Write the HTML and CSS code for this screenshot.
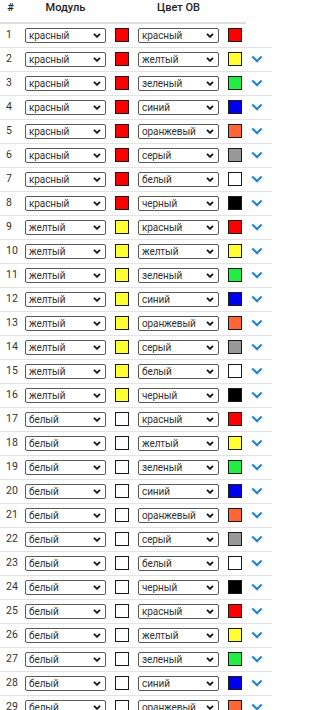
FILE: index.html
```html
<!DOCTYPE html>
<html lang="ru">
<head>
    <meta charset="UTF-8">
    <meta name="viewport" content="width=device-width, initial-scale=1.0">
    <title>Цвет ОВ</title>
    <link rel="stylesheet" href="styles.css">
</head>
<body>
    <table class="color-table">
        <colgroup>
            <col class="col-num">
            <col class="col-pick">
            <col class="col-swatch">
            <col class="col-pick">
            <col class="col-swatch">
            <col class="col-more">
        </colgroup>
        <thead>
            <tr>
                <th>#</th>
                <th>Модуль</th>
                <th></th>
                <th>Цвет ОВ</th>
                <th></th>
                <th class="blank"></th>
            </tr>
        </thead>
        <tbody id="rows"></tbody>
    </table>

    <script>
        const colors = {
            'красный': '#ff0000',
            'желтый': '#ffff33',
            'зеленый': '#22ee44',
            'синий': '#0000ee',
            'оранжевый': '#ff6633',
            'серый': '#999999',
            'белый': '#ffffff',
            'черный': '#000000'
        };
        const names = Object.keys(colors);

        // Module colour / fibre colour pairs
        const rows = [];
        ['красный', 'желтый', 'белый', 'белый'].forEach(module => {
            names.forEach(fibre => rows.push([module, fibre]));
        });

        function picker(value) {
            const options = names.map(n =>
                `<option${n === value ? ' selected' : ''}>${n}</option>`).join('');
            return `<span class="pick"><select>${options}</select>` +
                `<svg class="pick-arrow" width="8" height="5" viewBox="0 0 8 5">` +
                `<path d="M1 0.8 L4 3.8 L7 0.8" fill="none" stroke="#111" stroke-width="1.8"/></svg></span>`;
        }

        function swatch(value) {
            return `<span class="swatch" style="background: ${colors[value]}"></span>`;
        }

        const body = document.getElementById('rows');
        body.innerHTML = rows.slice(0, 29).map(([module, fibre], i) => `
            <tr>
                <td class="num">${i + 1}</td>
                <td>${picker(module)}</td>
                <td>${swatch(module)}</td>
                <td>${picker(fibre)}</td>
                <td>${swatch(fibre)}</td>
                <td>${i === 0 ? '' :
                    '<svg class="more" width="12" height="8" viewBox="0 0 12 8"><path d="M1.3 1.5 L6 6 L10.7 1.5" fill="none" stroke="#2a8ad6" stroke-width="2.4"/></svg>'}</td>
            </tr>`).join('');
    </script>
</body>
</html>
```

FILE: styles.css
```css
* {
    box-sizing: border-box;
}

body {
    margin: 0;
    font-family: Roboto, "Liberation Sans", sans-serif;
    font-size: 11px;
    color: #333;
    background: white;
}

.color-table {
    width: 272px;
    table-layout: fixed;
    border-collapse: collapse;
    border-spacing: 0;
}

.col-num {
    width: 20px;
}

.col-pick {
    width: 90px;
}

.col-swatch {
    width: 23px;
}

.col-more {
    width: 26px;
}

.color-table th {
    height: 22px;
    padding: 1px 4px 8px 5px;
    line-height: 13px;
    vertical-align: top;
    font-weight: 500;
    text-align: center;
    color: #222;
    border-bottom: 2px solid #dedede;
}

.color-table th.blank {
    border-bottom: none;
}

.color-table td {
    height: 24px;
    padding: 0 4px 0 5px;
    vertical-align: middle;
    border-bottom: 1px solid #e2e2e2;
}

.color-table td.num {
    padding-left: 6px;
    padding-bottom: 2px;
    font-size: 10.5px;
}

.pick {
    position: relative;
    display: block;
    width: 81px;
    height: 15px;
}

.pick select {
    appearance: none;
    -webkit-appearance: none;
    display: block;
    width: 81px;
    height: 15px;
    margin: 0;
    padding: 0 12px 0 3px;
    border: 1px solid #5a5a5a;
    border-radius: 2px;
    background: white;
    font-family: inherit;
    font-size: 10px;
    letter-spacing: -0.1px;
    line-height: 13px;
    color: #333;
}

.pick-arrow {
    position: absolute;
    right: 5px;
    top: 5px;
    pointer-events: none;
}

.swatch {
    display: block;
    width: 14px;
    height: 14px;
    border: 1px solid #1a1a1a;
}

.more {
    display: block;
}
```
